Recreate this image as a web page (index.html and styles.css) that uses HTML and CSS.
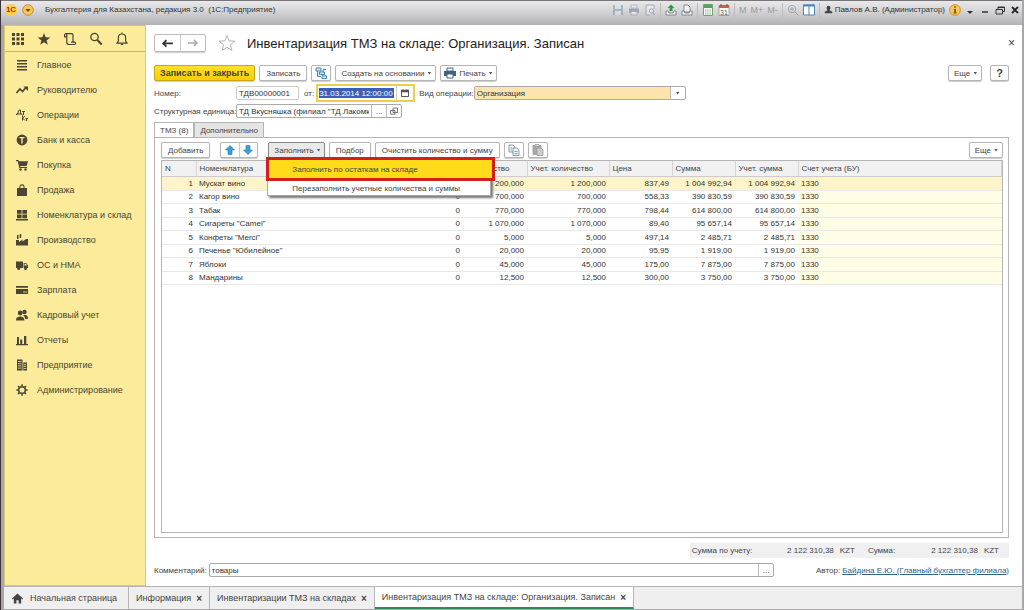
FILE: index.html
```
<!DOCTYPE html>
<html lang="ru">
<head>
    <meta charset="UTF-8">
    <meta name="viewport" content="width=device-width, initial-scale=1.0">
    <title>Бухгалтерия для Казахстана, редакция 3.0</title>
    <link rel="stylesheet" href="styles.css">
</head>
<body>
    <header class="titlebar">
        <span class="logo">1С</span>
        <button class="round-btn" aria-label="Главное меню"><svg viewBox="0 0 12 12"><circle cx="6" cy="6" r="5.3" fill="#f9c65a" stroke="#c98d33"/><path d="M3.4 5h5.2L6 8z" fill="#6b4a12"/></svg></button>
        <span class="app-title">Бухгалтерия для Казахстана, редакция 3.0 &nbsp;(1С:Предприятие)</span>
        <div class="tools">
            <button class="tool faded" aria-label="Сохранить"><svg viewBox="0 0 12 12"><path d="M1 1h10v10H1z" fill="#8b9bb0"/><path d="M3 1h6v4H3zM3 7h6v4H3z" fill="#dde3ea"/></svg></button>
            <button class="tool faded" aria-label="Печать"><svg viewBox="0 0 12 12"><path d="M1 4.500h10V9H1z" fill="#7b8796"/><path d="M3 1h6v3H3zM3 7.500h6V11H3z" fill="#edf0f3" stroke="#7b8796" stroke-width=".7"/></svg></button>
            <button class="tool faded" aria-label="Просмотр"><svg viewBox="0 0 12 12" fill="none" stroke="#7b8796"><path d="M10 5V1H2v10h4" fill="#eef0f2"/><circle cx="7.500" cy="7" r="2.200"/><path d="m9 9 2 2"/></svg></button>
            <i class="sep"></i>
            <button class="tool" aria-label="Загрузить"><svg viewBox="0 0 12 12"><path d="M1 7h2l1 2h4l1-2h2v4H1z" fill="#f3f4f5" stroke="#69727c" stroke-width=".8"/><path d="M7.500 7V4h2L6 .5 2.500 4h2v3z" fill="#2f9a45"/></svg></button>
            <button class="tool" aria-label="Выгрузить"><svg viewBox="0 0 12 12" fill="#f3f4f5" stroke="#69727c" stroke-width=".8"><path d="M3 1h4l2 2v5H3z"/><path d="M1 7h2l1 2h4l1-2h2v4H1z"/></svg></button>
            <i class="sep"></i>
            <button class="tool" aria-label="Калькулятор"><svg viewBox="0 0 12 12"><path d="M1.500.5h9v11h-9z" fill="#fff" stroke="#6ba66c"/><path d="M2 1h8v3H2z" fill="#4ea55d"/><path d="M3 6h6M3 8h6M3 10h6" stroke="#8aa58b" stroke-dasharray="1.500 .7"/></svg></button>
            <button class="tool" aria-label="Календарь"><svg viewBox="0 0 12 12"><path d="M1 1.500h10v10H1z" fill="#fff" stroke="#a9a09a"/><path d="M1 1h10v3H1z" fill="#b9684c"/><path d="M3 0v2M9 0v2" stroke="#754434"/><text x="6" y="10.500" font-size="7" text-anchor="middle" fill="#555">31</text></svg></button>
            <i class="sep"></i>
            <button class="mem">M</button>
            <button class="mem">M+</button>
            <button class="mem">M-</button>
            <i class="sep"></i>
            <button class="tool faded" aria-label="Масштаб"><svg viewBox="0 0 12 12" fill="none" stroke="#7b8796"><circle cx="5" cy="5" r="3.700"/><path d="m8 8 3.500 3.500M3 5h4M5 3v4"/></svg></button>
            <button class="tool" aria-label="Панели"><svg viewBox="0 0 12 12"><path d="M.5 1h11v10H.5z" fill="#fff" stroke="#4e86b8"/><path d="M0 .5h12v2H0zM5.500 1h1v10h-1z" fill="#4e86b8"/></svg></button>
            <i class="sep"></i>
            <span class="user"><svg viewBox="0 0 12 12"><path d="M6 1a2.500 2.500 0 0 1 2.500 2.700Q8.500 6 7.300 7L11 9v2H1V9l3.700-2Q3.500 6 3.500 3.700A2.500 2.500 0 0 1 6 1z" fill="#444"/></svg>Павлов А.В. (Администратор)</span>
            <button class="round-btn" aria-label="Информация"><svg viewBox="0 0 12 12"><circle cx="6" cy="6" r="5.400" fill="#f9c65a" stroke="#d09332"/><path d="M5.300 2.300h1.500v1.500H5.300zM4.800 5h2v3.600h.7v.8H4.600v-.8h.7V5.800h-.5z" fill="#6b4a12"/></svg></button>
            <button class="win" aria-label="Ещё"><svg viewBox="0 0 10 10"><path d="M2 6h6L5 9z" fill="#333"/></svg></button>
            <button class="win" aria-label="Свернуть"><svg viewBox="0 0 10 10"><path d="M2 7h6" stroke="#333" stroke-width="1.500"/></svg></button>
            <button class="win" aria-label="Развернуть"><svg viewBox="0 0 10 10" fill="none" stroke="#333"><path d="M3 4V2h6.500v4.500H8M1 4.500h6.500V9H1zM3 2.500h6"/></svg></button>
            <button class="win" aria-label="Закрыть программу"><svg viewBox="0 0 10 10"><path d="m2 2 6 6m0-6L2 8" stroke="#222" stroke-width="1.800"/></svg></button>
        </div>
    </header>

    <div class="workspace">
        <aside class="sidebar">
            <div class="quick">
                <button aria-label="Меню функций"><svg viewBox="0 0 14 14"><path d="M1 1h3v3H1zM5.500 1h3v3h-3zM10 1h3v3h-3zM1 5.500h3v3H1zM5.500 5.500h3v3h-3zM10 5.500h3v3h-3zM1 10h3v3H1zM5.500 10h3v3h-3zM10 10h3v3h-3z"/></svg></button>
                <button aria-label="Избранное"><svg viewBox="0 0 14 14"><path d="m7 1 1.600 4.300 4.600.2-3.600 2.900 1.200 4.400L7 10.300l-3.800 2.500 1.200-4.400L.8 5.500l4.600-.2z"/></svg></button>
                <button aria-label="История"><svg viewBox="0 0 14 14" fill="none" stroke="#4a4632" stroke-width="1.200"><path d="M3.800 4.800H1.600V3c0-1.700 2.200-1.700 2.200 0v7.500c0 2 2 2 2.500 2h5.200c1.400 0 1.400-2.300 0-2.300H10V3c0-1-.5-1.400-1.400-1.400H2.800M8 10.200h2"/></svg></button>
                <button aria-label="Поиск"><svg viewBox="0 0 14 14" fill="none" stroke="#4a4632"><circle cx="5.500" cy="5" r="3.700" stroke-width="1.300"/><path d="m8.300 8 4.400 4.500" stroke-width="2"/></svg></button>
                <button aria-label="Оповещения"><svg viewBox="0 0 14 14" fill="none" stroke="#4a4632" stroke-width="1.200"><path d="M2 11.200h10L10.600 9V5.500C10.600 3 9 2 7 2S3.400 3 3.400 5.500V9zM7 .5V2M5.800 12.500h2.400"/></svg></button>
            </div>
            <nav class="sections">
                <a href="#"><svg viewBox="0 0 12 12"><path d="M1 1h10v1.500H1zM1 4h10v1.500H1zM1 7h10v1.500H1zM1 10h10v1.500H1z"/></svg>Главное</a>
                <a href="#"><svg viewBox="0 0 12 12"><path d="m.5 9 3.500-4 2.500 2.500L9.500 4" fill="none" stroke="#4a4632" stroke-width="1.700"/><path d="M7.500 2.500H12V7z"/></svg>Руководителю</a>
                <a href="#"><svg viewBox="0 0 12 12" fill="none" stroke="#4a4632"><path d="M1.500 5.500V5L3 1h1.500v4M.5 6V5H6v1M6 2.500h3M7.500 2.500V6M6.500 6.500v5M9 7l-2.500 2L9 11.500M9.500 9.500h2.500M10.700 9.500V12"/></svg>Операции</a>
                <a href="#"><svg viewBox="0 0 12 12"><circle cx="6" cy="6" r="5.400"/><path d="M3.500 3h5v1.300H6.700V9.500H5.300V4.300H3.500z" fill="#fbeb9b"/></svg>Банк и касса</a>
                <a href="#"><svg viewBox="0 0 12 12"><path d="M0 1h2.500L3 2.300h9L10.700 7H4.200l.2.900H11V9H3.300L1.700 2.200H0z"/><circle cx="4.500" cy="10.500" r="1.200"/><circle cx="9.500" cy="10.500" r="1.200"/></svg>Покупка</a>
                <a href="#"><svg viewBox="0 0 12 12"><path d="M1 4h10v8H1z"/><path d="M4 6V2.500C4 .3 8 .3 8 2.500V6" fill="none" stroke="#4a4632" stroke-width="1.100"/></svg>Продажа</a>
                <a href="#"><svg viewBox="0 0 12 12"><path d="M1 1h4.600v3.800H1zM6.400 1H11v3.800H6.400zM1 5.600h4.600v3.600H1zM6.400 5.600H11v3.600H6.400zM0 10h12v1.400H0z"/></svg>Номенклатура и склад</a>
                <a href="#"><svg viewBox="0 0 12 12"><path d="M0 11.500V6h3v2l3.500-2.500v2L10 5h2v6.500zM1 1h1.500v4H1zM3.700 0h1.500v4H3.700z"/></svg>Производство</a>
                <a href="#"><svg viewBox="0 0 12 12"><path d="M0 2.500h7V9H0zM7.600 4h2.600L12 6.500V9H7.600z"/><circle cx="2.700" cy="9.500" r="1.500"/><circle cx="9.500" cy="9.500" r="1.500"/><path d="M8.500 4.800H10l1 1.700H8.500z" fill="#fbeb9b"/></svg>ОС и НМА</a>
                <a href="#"><svg viewBox="0 0 12 12"><path d="M0 2h12v1.700H0zM0 5h12v5H0z"/><path d="M7 8h4" stroke="#fbeb9b" stroke-width=".8"/></svg>Зарплата</a>
                <a href="#"><svg viewBox="0 0 12 12"><circle cx="8.500" cy="3" r="2.200"/><circle cx="4.200" cy="4" r="2.400"/><path d="M0 11.500c0-3 1.500-4 4.200-4s4.200 1 4.200 4zM7 6.500c3-1.300 5 0 5 3.500H9.200C9 8.300 8.200 7 7 6.500z"/></svg>Кадровый учет</a>
                <a href="#"><svg viewBox="0 0 12 12"><path d="M1 3h2v7H1zM4.200 5.500h2V10h-2zM8 2h2.300v8H8zM0 10h12v1.300H0z"/></svg>Отчеты</a>
                <a href="#"><svg viewBox="0 0 12 12"><path d="M1 .5h5.500v11H1zM7.300 3.500H11v8H7.300z"/><path d="M2 2.500h3.500M2 4.700h3.500M2 6.900h3.500M2 9.100h3.500M8 5.500h2.200M8 7.500h2.200M8 9.500h2.200" stroke="#fbeb9b" stroke-width=".8"/></svg>Предприятие</a>
                <a href="#"><svg viewBox="0 0 12 12" fill="none" stroke="#4a4632"><circle cx="6" cy="6" r="3.300" stroke-width="1.500"/><path d="M6 .3v2M6 9.700v2M.3 6h2M9.700 6h2M2 2l1.400 1.400M8.600 8.600 10 10M10 2 8.600 3.400M3.400 8.600 2 10" stroke-width="1.500"/></svg>Администрирование</a>
            </nav>
        </aside>

        <main class="form">
            <div class="form-head">
                <div class="history">
                    <button aria-label="Назад"><svg viewBox="0 0 12 10"><path d="M11 5H2M5 2 2 5l3 3" fill="none" stroke="#333" stroke-width="1.700"/></svg></button>
                    <button aria-label="Вперед"><svg viewBox="0 0 12 10"><path d="M1 5h9M7 2l3 3-3 3" fill="none" stroke="#aaa" stroke-width="1.500"/></svg></button>
                </div>
                <button class="fav" aria-label="В избранное"><svg viewBox="0 0 18 18"><path d="m9 1.500 2.100 5.300 5.700.4-4.400 3.600 1.500 5.600L9 13.300l-4.900 3.100 1.500-5.600L1.200 7.200l5.700-.4z" fill="#fff" stroke="#b5b5b5"/></svg></button>
                <h1>Инвентаризация ТМЗ на складе: Организация. Записан</h1>
                <button class="close" aria-label="Закрыть">×</button>
            </div>

            <div class="commands">
                <button class="btn primary">Записать и закрыть</button>
                <button class="btn">Записать</button>
                <button class="btn icon" aria-label="Структура подчиненности"><svg viewBox="0 0 12 12" fill="#d8e8f2" stroke="#4a83a8"><path d="M1 1h5v3H1zM4.500 5h5v2.500h-5zM7 8.800h4.500v2.700H7zM2.500 4v5.500H6M8 5V2.500h3" /></svg></button>
                <button class="btn drop">Создать на основании</button>
                <button class="btn drop print"><svg viewBox="0 0 12 12"><path d="M0 4h12v5H0z" fill="#3d6582"/><path d="M3 1h6v3H3zM3 7h6v4H3z" fill="#fff" stroke="#3d6582"/></svg>Печать</button>
                <span class="grow"></span>
                <button class="btn drop">Еще</button>
                <button class="btn help">?</button>
            </div>

            <div class="field-row">
                <label class="lead" for="number">Номер:</label>
                <input class="number" id="number" type="text" value="ТДВ00000001">
                <label class="from" for="date">от:</label>
                <div class="date-box">
                    <span class="date-sel"><input id="date" type="text" value="31.03.2014 12:00:00"></span>
                    <button aria-label="Выбрать дату"><svg viewBox="0 0 8 8"><path d="M.5 1.500h7v6h-7z" fill="#fff" stroke="#555"/><path d="M0 1h8v2H0zM2 0v2M6 0v2" fill="#555" stroke="#555" stroke-width=".6"/></svg></button>
                </div>
                <label for="operation">Вид операции:</label>
                <div class="combo operation">
                    <input id="operation" type="text" value="Организация">
                    <button aria-label="Выбрать"><i class="caret"></i></button>
                </div>
            </div>
            <div class="field-row second">
                <label class="lead" for="unit">Структурная единица:</label>
                <div class="combo unit">
                    <input id="unit" type="text" value="ТД Вкусняшка (филиал &quot;ТД Лакомка&quot;)">
                    <button aria-label="Выбрать">...</button>
                    <button aria-label="Открыть"><svg viewBox="0 0 8 8" fill="#fff" stroke="#555" stroke-width=".8"><path d="M3 1h4.500v4.500H3zM.5 3.500H5v3.700H.5z"/></svg></button>
                </div>
            </div>

            <div class="tabs">
                <button class="tab active">ТМЗ (8)</button>
                <button class="tab">Дополнительно</button>
            </div>
            <section class="panel">
                <div class="panel-tools">
                    <button class="btn">Добавить</button>
                    <div class="arrows">
                        <button aria-label="Вверх"><svg viewBox="0 0 10 10"><path d="M5 .5 9.500 5H7v4.500H3V5H.5z" fill="#3b9fd4" stroke="#2275a3" stroke-width=".6"/></svg></button>
                        <button aria-label="Вниз"><svg viewBox="0 0 10 10"><path d="M5 9.500.5 5H3V.5h4V5h2.500z" fill="#3b9fd4" stroke="#2275a3" stroke-width=".6"/></svg></button>
                    </div>
                    <div class="fill">
                        <button class="btn drop pressed">Заполнить</button>
                        <div class="menu">
                            <button class="menu-item current">Заполнить по остаткам на складе</button>
                            <button class="menu-item">Перезаполнить учетные количества и суммы</button>
                        </div>
                    </div>
                    <button class="btn">Подбор</button>
                    <button class="btn">Очистить количество и сумму</button>
                    <button class="btn icon" aria-label="Копировать"><svg viewBox="0 0 12 12" fill="#f3f7f9" stroke="#71808b" stroke-width=".8"><path d="M1 1h4l2 2v5H1z"/><path d="M5 4h4l2 2v5.500H5zM6.500 7.500h3M6.500 9.500h3M2.500 4H4M2.500 6H4"/></svg></button>
                    <button class="btn icon" aria-label="Вставить"><svg viewBox="0 0 12 12" stroke="#999" stroke-width=".8"><path d="M1 1.500h8v9H1z" fill="#aaa"/><path d="M3 .5h4v2H3z" fill="#ddd"/><path d="M5 4h4l2 2v5.500H5z" fill="#ccc"/></svg></button>
                    <span class="grow"></span>
                    <button class="btn drop">Еще</button>
                </div>
                <div class="grid">
                    <table>
                        <colgroup>
                            <col class="c-n"><col class="c-name"><col class="c-diff"><col class="c-qty"><col class="c-acc"><col class="c-price"><col class="c-sum"><col class="c-sum"><col>
                        </colgroup>
                        <thead>
                            <tr><th>N</th><th>Номенклатура</th><th></th><th>Количество</th><th>Учет. количество</th><th>Цена</th><th>Сумма</th><th>Учет. сумма</th><th>Счет учета (БУ)</th></tr>
                        </thead>
                        <tbody>
                            <tr class="selected"><td>1</td><td>Мускат вино</td><td></td><td>1 200,000</td><td>1 200,000</td><td>837,49</td><td>1 004 992,94</td><td>1 004 992,94</td><td>1330</td></tr>
                            <tr><td>2</td><td>Кагор вино</td><td>0</td><td>700,000</td><td>700,000</td><td>558,33</td><td>390 830,59</td><td>390 830,59</td><td>1330</td></tr>
                            <tr><td>3</td><td>Табак</td><td>0</td><td>770,000</td><td>770,000</td><td>798,44</td><td>614 800,00</td><td>614 800,00</td><td>1330</td></tr>
                            <tr><td>4</td><td>Сигареты "Camel"</td><td>0</td><td>1 070,000</td><td>1 070,000</td><td>89,40</td><td>95 657,14</td><td>95 657,14</td><td>1330</td></tr>
                            <tr><td>5</td><td>Конфеты "Merci"</td><td>0</td><td>5,000</td><td>5,000</td><td>497,14</td><td>2 485,71</td><td>2 485,71</td><td>1330</td></tr>
                            <tr><td>6</td><td>Печенье "Юбилейное"</td><td>0</td><td>20,000</td><td>20,000</td><td>95,95</td><td>1 919,00</td><td>1 919,00</td><td>1330</td></tr>
                            <tr><td>7</td><td>Яблоки</td><td>0</td><td>45,000</td><td>45,000</td><td>175,00</td><td>7 875,00</td><td>7 875,00</td><td>1330</td></tr>
                            <tr><td>8</td><td>Мандарины</td><td>0</td><td>12,500</td><td>12,500</td><td>300,00</td><td>3 750,00</td><td>3 750,00</td><td>1330</td></tr>
                        </tbody>
                    </table>
                </div>
            </section>

            <div class="totals">
                <span class="t-label">Сумма по учету:</span><span class="t-value">2 122 310,38</span><span class="t-cur">KZT</span>
                <span class="t-label short">Сумма:</span><span class="t-value">2 122 310,38</span><span class="t-cur">KZT</span>
            </div>
            <div class="comment-row">
                <label for="comment">Комментарий:</label>
                <div class="combo comment">
                    <input id="comment" type="text" value="товары">
                    <button aria-label="Выбрать">...</button>
                </div>
                <span class="author">Автор: <a href="#">Байдина Е.Ю. (Главный бухгалтер филиала)</a></span>
            </div>
        </main>
    </div>

    <footer class="taskbar">
        <button class="task home"><svg viewBox="0 0 12 12"><path d="M6 .5 12 6l-.8 1L10 6v5.500H7.200V8H4.800v3.500H2V6L.8 7 0 6z" fill="#444"/></svg>Начальная страница</button>
        <button class="task">Информация <b>×</b></button>
        <button class="task">Инвентаризации ТМЗ на складах <b>×</b></button>
        <button class="task active">Инвентаризация ТМЗ на складе: Организация. Записан <b>×</b></button>
    </footer>
</body>
</html>
```
FILE: styles.css
```
* {
    margin: 0;
    padding: 0;
    box-sizing: border-box;
}

body {
    display: flex;
    flex-direction: column;
    height: 100vh;
    overflow: hidden;
    padding: 0 2px 1px 3px;
    background: #a9a7a8;
    border-left: 1px solid #3c3436;
    font-family: "Liberation Sans", Arial, sans-serif;
    font-size: 8px;
    color: #444;
}

button, input {
    font: inherit;
    color: inherit;
    border: none;
    background: none;
}

button {
    white-space: nowrap;
    cursor: pointer;
}

svg {
    display: block;
    flex: none;
}

.grow {
    flex: 1;
}

/* заголовок окна */
.titlebar {
    display: flex;
    align-items: center;
    height: 25px;
    margin-left: -3px;
    padding: 0 2px 7px 4px;
    border-top: 1px solid #77757a;
    background: linear-gradient(#e9e9ea, #d6d6d8 40%, #b2b2b5);
    flex: none;
}

.logo {
    width: 12px;
    height: 12px;
    border-radius: 6px;
    background: #f8d34c;
    color: #c22b1a;
    font-weight: bold;
    line-height: 12px;
    text-align: center;
}

.round-btn svg {
    width: 12px;
    height: 12px;
}

.titlebar > .round-btn {
    margin: 0 11px 0 5px;
}

.app-title {
    color: #333;
}

.tools {
    display: flex;
    align-items: center;
    gap: 4px;
    margin-left: auto;
}

.tool svg {
    width: 12px;
    height: 12px;
}

.faded {
    opacity: 0.6;
}

.sep {
    width: 1px;
    height: 14px;
    background: #bcbcbe;
}

.mem {
    color: #999;
    font-size: 9px;
}

.user {
    display: flex;
    align-items: center;
    gap: 2px;
    color: #333;
}

.user svg {
    width: 9px;
    height: 9px;
}

.win svg {
    width: 10px;
    height: 10px;
}

.win + .win {
    margin-left: 1px;
}

/* левая панель */
.workspace {
    display: flex;
    flex: 1;
    min-height: 0;
}

.sidebar {
    width: 142px;
    flex: none;
    background: #fbeb9b;
    border: 1px solid #d9c970;
    color: #4a4632;
}

.sidebar svg {
    fill: #4a4632;
}

.sidebar svg[fill="none"] {
    fill: none;
}

.quick {
    display: flex;
    align-items: center;
    gap: 12px;
    height: 26px;
    padding-left: 6px;
    border-bottom: 1px solid #c9b75c;
}

.quick svg {
    width: 14px;
    height: 14px;
}

.sections a {
    display: flex;
    align-items: center;
    gap: 9px;
    height: 25px;
    padding-left: 11px;
    color: #4a4632;
    font-size: 9px;
    text-decoration: none;
}

.sections svg {
    width: 12px;
    height: 12px;
}

/* форма документа */
.form {
    display: flex;
    flex-direction: column;
    flex: 1;
    min-width: 0;
    padding: 8px 13px 9px 8px;
    background: #fff;
}

.form-head {
    display: flex;
    align-items: center;
    height: 20px;
}

.history {
    display: flex;
    border: 1px solid #bbb;
    border-radius: 2px;
    box-shadow: 0 1px 1px #ccc;
}

.history button {
    width: 25px;
    height: 16px;
    padding: 0 6px;
}

.history button + button {
    border-left: 1px solid #ccc;
}

.fav {
    margin: 0 11px 0 12px;
}

.fav svg {
    width: 18px;
    height: 18px;
}

h1 {
    color: #222;
    font-size: 13px;
    font-weight: normal;
}

.close {
    margin-left: auto;
    margin-right: -6px;
    font-size: 12px;
}

.commands {
    display: flex;
    gap: 4px;
    margin-top: 12px;
}

.btn {
    display: flex;
    align-items: center;
    justify-content: center;
    gap: 3px;
    height: 16px;
    padding: 0 6px;
    border: 1px solid #b5b5b5;
    border-radius: 2px;
    background: #fff;
    box-shadow: 0 1px 1px #ccc;
    flex: none;
}

.btn svg {
    width: 12px;
    height: 12px;
}

.btn.icon {
    padding: 0 3px;
}

.btn.primary {
    padding: 0 5px;
    border-color: #c9a617;
    background: linear-gradient(#ffe12e, #f6cf00);
    font-size: 9px;
    font-weight: bold;
}

.btn.help {
    margin-left: 4px;
    padding: 0 5px;
    font-size: 11px;
    font-weight: bold;
}

.drop {
    padding: 0 4px 0 5px;
}

.drop.print {
    padding: 0 3px;
}

.drop::after, .caret {
    content: "";
    width: 4px;
    height: 3px;
    background: #555;
    clip-path: polygon(0 0, 100% 0, 50% 100%);
}

.caret {
    display: block;
    margin: auto;
}

.field-row {
    display: flex;
    align-items: center;
    height: 20px;
    margin-top: 2px;
}

.field-row.second {
    height: 16px;
    margin-top: 0;
}

.lead {
    width: 82px;
    white-space: nowrap;
}

input {
    min-width: 0;
    height: 12px;
    padding: 0 2px;
    color: #333;
}

.number {
    width: 63px;
    height: 14px;
    border: 1px solid #ccc;
    border-radius: 2px;
}

.from {
    margin: 0 2px 0 5px;
}

.date-box {
    display: flex;
    align-items: center;
    width: 99px;
    height: 18px;
    margin-right: 4px;
    border: 2px solid #ead04a;
}

.date-sel {
    flex: 1;
    padding: 0 2px 0 1px;
}

.date-sel input {
    display: block;
    width: 75px;
    height: 10px;
    padding: 0;
    background: #3c5fb5;
    color: #fff;
}

.date-box button {
    width: 17px;
    height: 14px;
    padding: 0 4px;
    border-left: 1px solid #ccc;
}

.combo {
    display: flex;
    height: 14px;
    border: 1px solid #aaa;
    border-radius: 2px;
}

.combo input {
    flex: 1;
}

.combo button {
    width: 15px;
    border-left: 1px solid #bbb;
}

.combo svg {
    width: 8px;
    height: 8px;
    margin: auto;
}

.operation {
    width: 212px;
}

.operation input {
    background: #fde3ac;
}

.unit {
    width: 166px;
}

/* закладки и таблица */
.tabs {
    display: flex;
    margin-top: 3px;
}

.tab {
    height: 15px;
    padding: 0 5px;
    border: 1px solid #b5b5b5;
    border-bottom: none;
    background: #e4e4e4;
}

.tab.active {
    background: #fff;
    position: relative;
    margin-bottom: -1px;
}

.panel {
    display: flex;
    flex-direction: column;
    flex: 1;
    min-height: 0;
    padding: 4px 5px 4px 6px;
    border: 1px solid #b5b5b5;
}

.panel-tools {
    display: flex;
    gap: 4px;
    margin-bottom: 2px;
}

.arrows {
    display: flex;
    height: 16px;
    margin: 0 6px;
    border: 1px solid #b5b5b5;
    border-radius: 2px;
    box-shadow: 0 1px 1px #ccc;
}

.arrows button {
    width: 18px;
    padding: 0 4px;
}

.arrows svg {
    width: 10px;
    height: 10px;
}

.arrows button + button {
    border-left: 1px solid #ccc;
    padding: 0 3px;
}

.fill {
    position: relative;
}

.pressed {
    padding: 0 3px 0 5px;
    background: #e9e9e9;
    border-color: #888;
}

.menu {
    position: absolute;
    top: 15px;
    left: -1px;
    z-index: 2;
    width: 224px;
    height: 39px;
    border: 1px solid #aaa;
    background: #fff;
    box-shadow: 2px 2px 2px #777;
}

.menu-item {
    display: block;
    width: 100%;
    height: 14px;
    padding-left: 24px;
    text-align: left;
}

.menu-item.current {
    width: 229px;
    height: 24px;
    margin: -1px 0 0 -2px;
    padding-left: 23px;
    border: 3px solid #d0211c;
    background: #ffdb1a;
}

.grid {
    flex: 1;
    min-height: 0;
    overflow: hidden;
    border: 1px solid #b5b5b5;
}

table {
    width: 100%;
    border-collapse: collapse;
    table-layout: fixed;
}

.c-n { width: 34px; }
.c-name { width: 216px; }
.c-diff { width: 51px; }
.c-qty { width: 64px; }
.c-acc { width: 82px; }
.c-price { width: 63px; }
.c-sum { width: 63px; }

th {
    height: 15px;
    padding: 0 3px;
    border-right: 1px solid #d5d5d5;
    border-bottom: 1px solid #ccc;
    background: #f1f1f1;
    font-weight: normal;
    text-align: left;
    white-space: nowrap;
}

td {
    height: 14px;
    padding: 0 3px;
    border-bottom: 1px solid #e8e8e8;
    color: #333;
    text-align: right;
    white-space: nowrap;
}

tr:nth-child(even) td {
    height: 13px;
}

td:nth-child(2) {
    text-align: left;
}

td:last-child {
    background: #fffde5;
    text-align: left;
}

.selected td, .selected td:last-child {
    background: #fdf4cb;
}

/* подвал */
.totals {
    display: flex;
    align-items: center;
    align-self: flex-end;
    height: 15px;
    margin-top: 5px;
    padding: 0 10px 0 2px;
    background: #f0f0f0;
}

.t-label {
    width: 82px;
}

.t-label.short {
    width: 50px;
    margin-left: 13px;
}

.t-value {
    width: 60px;
    text-align: right;
}

.t-cur {
    margin-left: 6px;
}

.comment-row {
    display: flex;
    align-items: center;
    height: 14px;
    margin-top: 5px;
}

.comment {
    flex: 1;
    margin: 0 42px 0 2px;
}

.author a {
    color: #2f6088;
}

/* открытые окна */
.taskbar {
    display: flex;
    height: 23px;
    flex: none;
    border-top: 1px solid #b5b5b5;
    background: #efefef;
}

.task {
    display: flex;
    align-items: center;
    gap: 5px;
    padding: 0 7px;
    border-right: 1px solid #b5b5b5;
    font-size: 9px;
}

.task b {
    font-size: 10px;
}

.task.home {
    gap: 7px;
    padding: 0 11px 0 8px;
}

.task svg {
    width: 11px;
    height: 11px;
}

.task.active {
    background: #fff;
    border-bottom: 2px solid #2e8b57;
}
```
